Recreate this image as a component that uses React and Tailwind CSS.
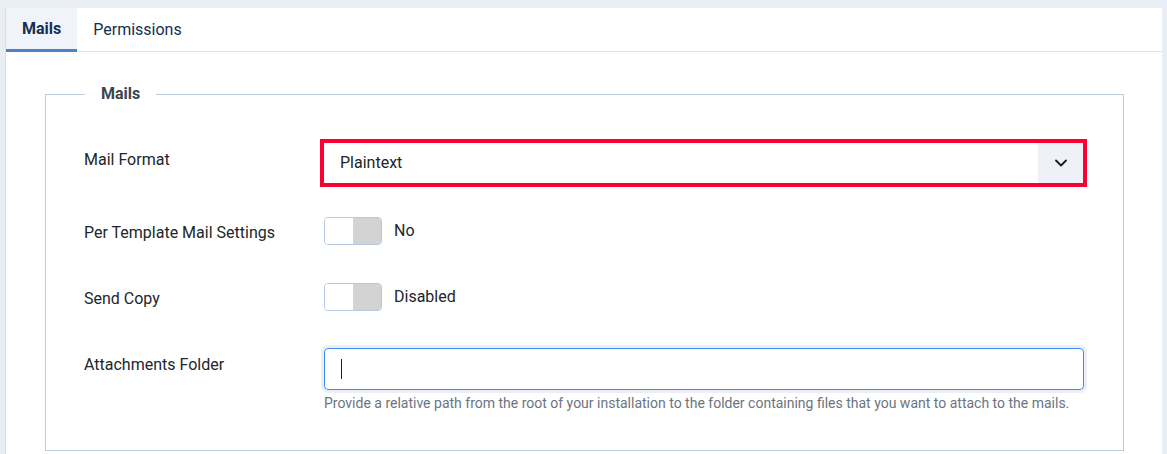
import React from 'react';
import { ChevronDown } from 'lucide-react';

const Toggle = ({ label }) => (
  <div className="flex items-center gap-3">
    <div className="flex w-[58px] h-[28px] rounded-[4px] border border-[#b8c7dd] overflow-hidden">
      <div className="flex-1 bg-white" />
      <div className="flex-1 bg-[#d3d3d3]" />
    </div>
    <span className="text-[16px] text-[#22262a]">{label}</span>
  </div>
);

const Row = ({ label, children, className, labelClass = '' }) => (
  <div className={`flex ${className}`}>
    <div className={`w-[240px] shrink-0 text-[16px] text-[#22262a] ${labelClass}`}>{label}</div>
    <div className="flex-1">{children}</div>
  </div>
);

export default function App() {
  return (
    <div className="min-h-[454px] bg-[#e9edf4] pt-2 pl-[5px] pr-[5px] font-['Roboto',sans-serif] overflow-hidden">
      <div className="bg-white border-l border-[#d5deea] h-[446px]">
        <div className="flex border-b border-[#dfe3e7] h-[44px]">
          <div className="px-4 flex items-center bg-[#f0f4fa] border-b-[3px] border-[#4a82c8] text-[16px] font-bold text-[#132f53] mb-[-1px]">
            Mails
          </div>
          <div className="px-4 flex items-center text-[16px] text-[#132f53]">Permissions</div>
        </div>

        <fieldset className="min-w-0 ml-[39px] mr-[38px] mt-[30px] border border-[#bccbe0] px-[38px] pb-[38px] pt-0 h-[369px]">
          <legend className="px-4 ml-[1px] text-[16px] font-bold text-[#3b4450]">Mails</legend>

          <Row label="Mail Format" className="mt-[42px] items-start">
            <div className="-ml-1 -mt-[9px] border-4 border-[#fb0032] w-[767px]">
              <div className="flex h-[40px] bg-white">
                <div className="flex-1 flex items-center pl-[16px] text-[16px] text-[#22262a]">Plaintext</div>
                <div className="w-[45px] bg-[#eef2f8] flex items-center justify-center">
                  <ChevronDown size={20} strokeWidth={2.2} className="text-[#1a1a1a]" />
                </div>
              </div>
            </div>
          </Row>

          <Row label="Per Template Mail Settings" className="mt-[29px] items-center" labelClass="pt-[5px]">
            <Toggle label="No" />
          </Row>

          <Row label="Send Copy" className="mt-[38px] items-center" labelClass="pt-[4px]">
            <Toggle label="Disabled" />
          </Row>

          <Row label="Attachments Folder" className="mt-[37px] items-start" labelClass="pt-[5px]">
            <div className="w-[760px] h-[42px] rounded-[4px] border border-[#3d8ef3] shadow-[0_0_0_3px_rgba(200,210,225,0.35)] flex items-center pl-[16px]">
              <div className="w-[1px] h-[20px] bg-[#222]" />
            </div>
            <div className="mt-[3px] text-[14px] text-[#6b7580] whitespace-nowrap">
              Provide a relative path from the root of your installation to the folder containing files that you want to attach to the mails.
            </div>
          </Row>
        </fieldset>
      </div>
    </div>
  );
}
